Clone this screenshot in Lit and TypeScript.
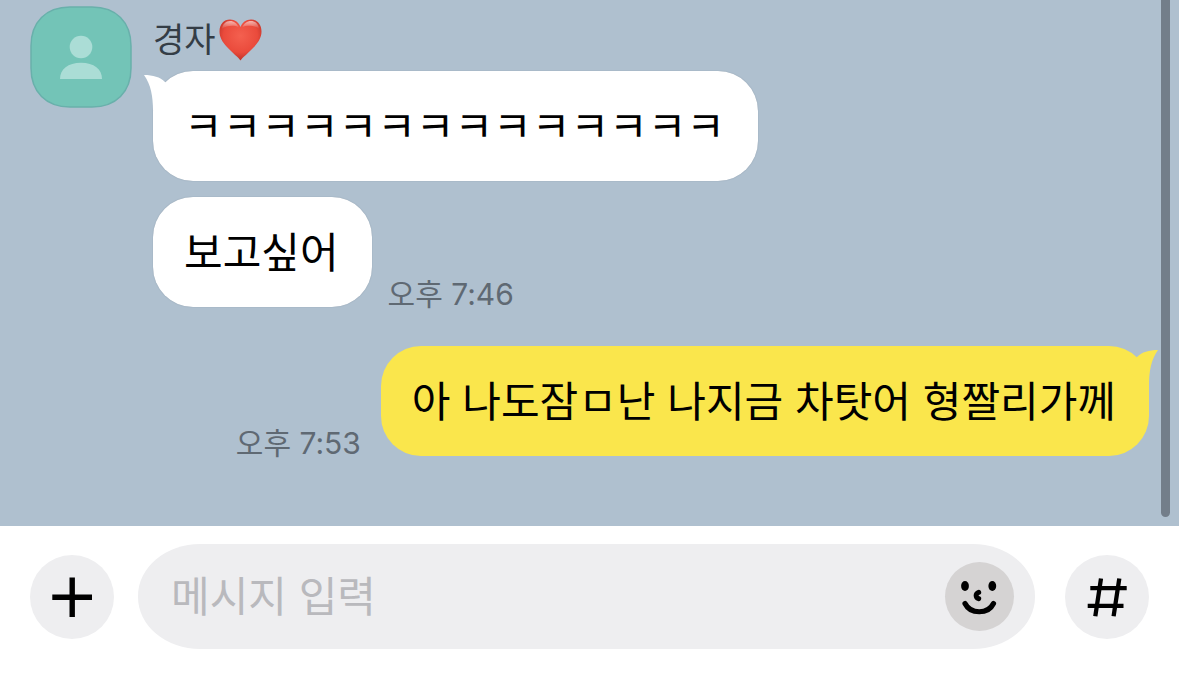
import { LitElement, html, css, svg } from "lit";
import { customElement, property } from "lit/decorators.js";

@customElement("chat-bubble")
class ChatBubble extends LitElement {
  @property({ type: Boolean, reflect: true }) mine = false;
  @property({ type: Boolean }) tail = false;
  @property() text = "";
  @property() time = "";

  static styles = css`
    :host { display: flex; align-items: flex-end; gap: 16px; }
    :host([mine]) { flex-direction: row-reverse; gap: 20px; }
    .bubble {
      position: relative;
      margin: 0;
      padding: 25px 33px 23px 31px;
      border-radius: 40px;
      background: #ffffff;
      box-shadow: 0 0 1px rgba(70, 90, 110, 0.5);
      color: #000;
      font-size: 42px;
      line-height: 62px;
      overflow-wrap: anywhere;
    }
    :host([mine]) .bubble { background: #fae64c; box-shadow: none; }
    .tail { position: absolute; top: 4px; left: -9px; fill: #ffffff; }
    :host([mine]) .tail { left: auto; right: -9px; transform: scaleX(-1); fill: #fae64c; }
    .time {
      flex: none;
      color: #5f6973;
      font-size: 30px;
      line-height: 26px;
    }
  `;

  render() {
    return html`
      <p class="bubble">
        ${this.tail
          ? html`<svg class="tail" width="32" height="36" viewBox="0 0 32 36" aria-hidden="true">
              <path d="M0 0C9 0 16 2 21 7L32 20L9 36C9 21 7 10 0 0Z" />
            </svg>`
          : null}${this.text}
      </p>
      ${this.time ? html`<time class="time">${this.time}</time>` : null}
    `;
  }
}

const heart = svg`
  <defs>
    <radialGradient id="red" cx="0.5" cy="0.4" r="0.62">
      <stop offset="0" stop-color="#f4604f" />
      <stop offset="0.65" stop-color="#ea4b3c" />
      <stop offset="1" stop-color="#b92f26" />
    </radialGradient>
    <linearGradient id="shine" x1="0" y1="0" x2="0" y2="1">
      <stop offset="0" stop-color="#fff" stop-opacity="0.6" />
      <stop offset="1" stop-color="#fff" stop-opacity="0" />
    </linearGradient>
  </defs>
  <path fill="url(#red)" d="M21.500 41.500C20 39 13 33.500 8 28C3 22.500 0.500 18 0.500 12.500C0.500 5 5 0.500 11 0.500C16 0.500 20 3.500 21.500 8C23 3.500 27 0.500 32 0.500C38 0.500 42.500 5 42.500 12.500C42.500 18 40 22.500 35 28C30 33.500 23 39 21.500 41.500Z" />
  <path fill="url(#shine)" d="M3 10C3.500 5 7 2 11 2C15 2 18 4.500 19.500 8C16 6 7 6 3 10ZM40 10C39.500 5 36 2 32 2C28 2 25 4.500 23.500 8C27 6 36 6 40 10Z" />
`;

@customElement("app-root")
class AppRoot extends LitElement {
  static styles = css`
    :host {
      display: flex;
      flex-direction: column;
      min-height: 100vh;
      background: #fff;
      font-family: Inter, "Noto Sans CJK KR", sans-serif;
    }
    * { box-sizing: border-box; }
    .chat {
      position: relative;
      flex: 1;
      display: flex;
      flex-direction: column;
      gap: 39px;
      padding: 6px 30px 69px;
      background: #afc0cf;
    }
    .scrollbar {
      position: absolute;
      top: 0;
      right: 9px;
      bottom: 9px;
      width: 9px;
      border-radius: 0 0 5px 5px;
      background: #737e8a;
    }
    .incoming { display: flex; align-items: flex-start; gap: 21px; }
    .avatar { flex: none; display: block; }
    .messages { flex: 1; display: flex; flex-direction: column; gap: 16px; }
    .name {
      display: flex;
      align-items: center;
      gap: 3px;
      height: 49px;
      margin: 0;
      padding-top: 18px;
      color: #343d46;
      font-size: 34px;
      font-weight: 400;
      line-height: 48px;
    }
    .composer {
      display: flex;
      align-items: center;
      gap: 24px;
      padding: 18px 30px 49px;
    }
    button { padding: 0; border: 0; cursor: pointer; }
    .round { flex: none; width: 84px; height: 84px; border-radius: 50%; background: #eeeef0; }
    .hash { margin-left: 6px; }
    .round svg, .face svg { display: block; }
    .field {
      flex: 1;
      min-width: 0;
      display: flex;
      align-items: center;
      height: 105px;
      padding: 0 21px 0 33px;
      border-radius: 62px / 52px;
      background: #eeeef0;
    }
    .input {
      flex: 1;
      min-width: 0;
      padding: 0;
      border: 0;
      outline: 0;
      background: none;
      color: #000;
      font-family: inherit;
      font-size: 42px;
      line-height: 62px;
    }
    .input::placeholder { color: #b9b9bd; opacity: 1; }
    .face { flex: none; width: 69px; height: 69px; border-radius: 50%; background: #d5d3d3; }
  `;

  render() {
    return html`
      <main class="chat">
        <section class="incoming">
          <svg class="avatar" width="102" height="102" viewBox="0 0 102 102" aria-hidden="true">
            <path fill="#73c4b7" stroke="#69b0ab" stroke-width="1.500"
              d="M40 1H62C86 1 101 16 101 40V62C101 86 86 101 62 101H40C16 101 1 86 1 62V40C1 16 16 1 40 1Z" />
            <circle cx="51" cy="41" r="11.300" fill="#abddd6" />
            <path fill="#abddd6" d="M30 73C30 63 38 56.700 51 56.700C64 56.700 72 63 72 73Z" />
          </svg>
          <div class="messages">
            <h2 class="name">경자<svg width="43" height="42" viewBox="0 0 43 42" role="img" aria-label="❤️">${heart}</svg></h2>
            <chat-bubble tail text="ㅋㅋㅋㅋㅋㅋㅋㅋㅋㅋㅋㅋㅋㅋ"></chat-bubble>
            <chat-bubble text="보고싶어" time="오후 7:46"></chat-bubble>
          </div>
        </section>
        <chat-bubble mine tail text="아 나도잠ㅁ난 나지금 차탓어 형짤리가께" time="오후 7:53"></chat-bubble>
        <div class="scrollbar"></div>
      </main>
      <form class="composer" @submit=${(e: Event) => e.preventDefault()}>
        <button class="round" type="button" aria-label="첨부">
          <svg width="84" height="84" viewBox="0 0 84 84" fill="none" stroke="#000" stroke-width="5.400">
            <path d="M42.200 22.500V62M22.300 42.200H62" />
          </svg>
        </button>
        <div class="field">
          <input class="input" type="text" placeholder="메시지 입력" aria-label="메시지 입력" />
          <button class="face" type="button" aria-label="이모티콘">
            <svg width="69" height="69" viewBox="0 0 69 69" fill="none" stroke="#000" stroke-linecap="round">
              <ellipse cx="20" cy="24" rx="3.900" ry="5" fill="#000" stroke="none" />
              <ellipse cx="47.300" cy="24" rx="3.900" ry="5" fill="#000" stroke="none" />
              <path stroke-width="5" d="M33.700 30.300C30.300 31.500 30.300 35.500 33.700 36.700" />
              <path stroke-width="5.200" d="M20 41.500C25.500 52.500 43 52.500 48.500 41.500" />
            </svg>
          </button>
        </div>
        <button class="round hash" type="button" aria-label="샵검색">
          <svg width="84" height="84" viewBox="0 0 84 84" fill="none" stroke="#000" stroke-width="4.300">
            <path d="M36 23.500L30.300 61.200M54.300 23.500L48.600 61.200M25.300 33.200H61.700M22.700 50.800H58.500" />
          </svg>
        </button>
      </form>
    `;
  }
}
